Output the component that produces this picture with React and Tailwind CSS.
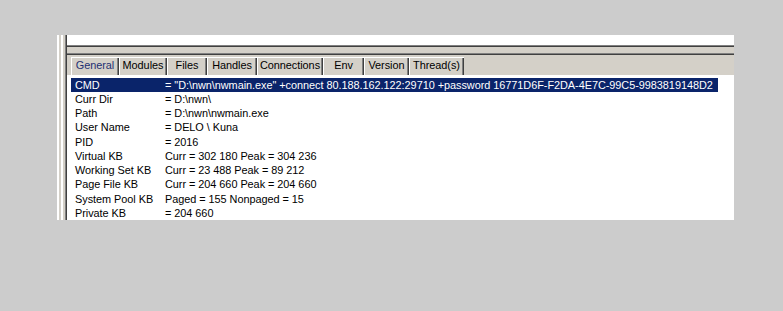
import React from "react";

const tabs = [
  { label: "General", w: 48, active: true },
  { label: "Modules", w: 48 },
  { label: "Files", w: 40 },
  { label: "Handles", w: 50 },
  { label: "Connections", w: 66 },
  { label: "Env", w: 41 },
  { label: "Version", w: 45 },
  { label: "Thread(s)", w: 55 },
];

const rows = [
  ["CMD", '= "D:\\nwn\\nwmain.exe" +connect 80.188.162.122:29710 +password 16771D6F-F2DA-4E7C-99C5-9983819148D2'],
  ["Curr Dir", "= D:\\nwn\\"],
  ["Path", "= D:\\nwn\\nwmain.exe"],
  ["User Name", "= DELO \\ Kuna"],
  ["PID", "= 2016"],
  ["Virtual KB", "Curr = 302 180 Peak = 304 236"],
  ["Working Set KB", "Curr = 23 488 Peak = 89 212"],
  ["Page File KB", "Curr = 204 660 Peak = 204 660"],
  ["System Pool KB", "Paged = 155 Nonpaged = 15"],
  ["Private KB", "= 204 660"],
];

export default function App() {
  return (
    <div
      className="w-[783px] h-[311px] bg-[#cccccc] pt-[35px] pl-[57px] overflow-hidden text-[10.9px] tracking-[-0.04px] text-black"
      style={{ fontFamily: '"Liberation Sans", Arial, sans-serif' }}
    >
      <div className="flex w-[677px] h-[185px]">
        <div className="w-[2px] bg-white" />
        <div className="w-[2px] bg-[#d4d0c8]" />
        <div className="w-[2px] bg-white" />
        <div className="w-[2px] bg-[#d4d0c8]" />
        <div className="w-[1px] bg-[#808080]" />
        <div className="w-[1px] bg-[#404040]" />
        <div className="flex-1 flex flex-col bg-white min-w-0">
          <div className="h-[10px] bg-white" />
          <div className="h-[1px] bg-[#808080]" />
          <div className="h-[1px] bg-[#404040]" />
          <div className="h-[6px] bg-[#d4d0c8]" />
          <div className="h-[1px] bg-[#808080]" />
          <div className="h-[1px] bg-[#404040]" />
          <div className="h-[20px] bg-[#d4d0c8] flex items-end pl-[4px]">
            {tabs.map((t) => (
              <div
                key={t.label}
                className={
                  "h-[18px] flex items-center justify-center leading-none shadow-[inset_1px_1px_0_#ffffff,inset_-1px_0_0_#404040,inset_-2px_0_0_#808080] " +
                  (t.active ? "text-[#1f2f72]" : "text-black")
                }
                style={{ width: t.w }}
              >
                <span className="pb-[1px]">{t.label}</span>
              </div>
            ))}
          </div>
          <div className="h-[1px] bg-white" />
          <div className="h-[2px] bg-white" />
          <div className="flex flex-col pl-[4px]">
            {rows.map(([k, v], i) => (
              <div
                key={k}
                className={
                  "h-[14.22px] flex items-center whitespace-nowrap px-[4px] w-[647px] " +
                  (i === 0 ? "bg-[#0a246a] text-white" : "")
                }
              >
                <span className="w-[90px] shrink-0">{k}</span>
                <span>{v}</span>
              </div>
            ))}
          </div>
        </div>
      </div>
    </div>
  );
}
